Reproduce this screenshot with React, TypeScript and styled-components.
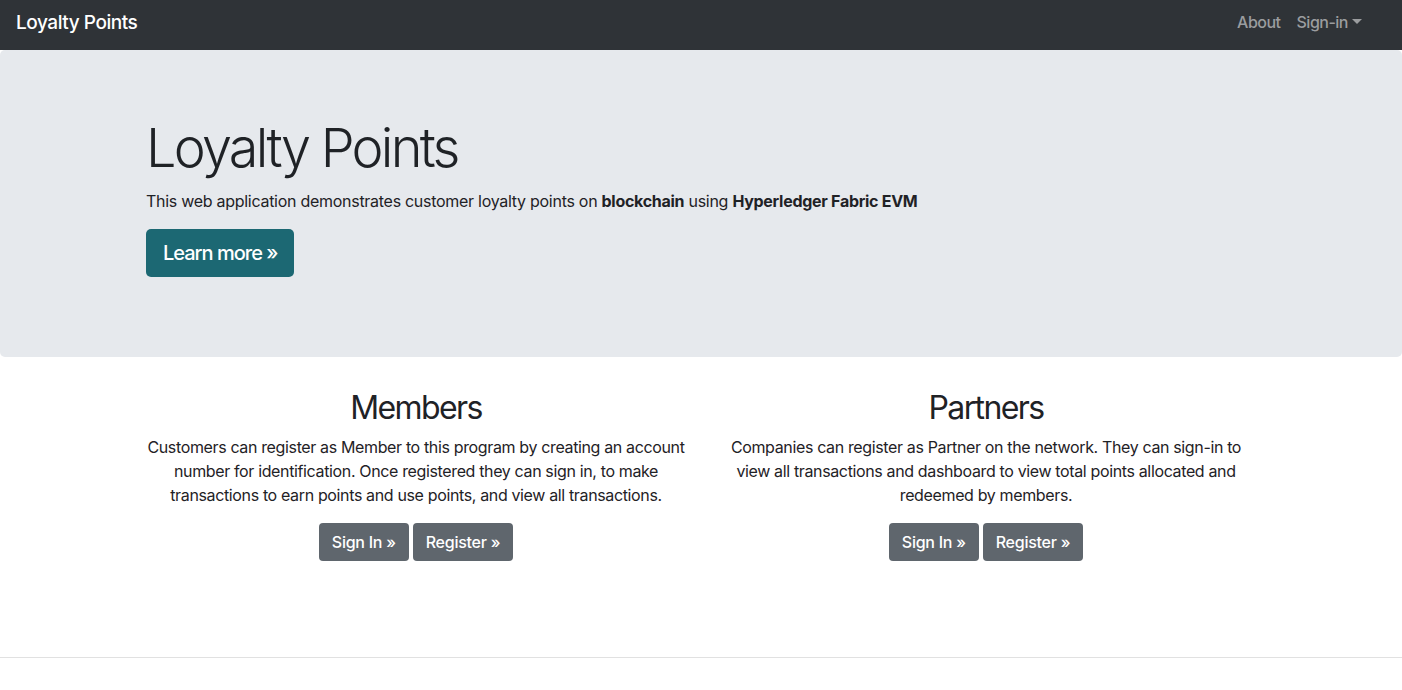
import React from 'react';
import styled, { createGlobalStyle } from 'styled-components';

const GlobalStyle = createGlobalStyle`
  html, body {
    margin: 0;
    padding: 0;
    background: #ffffff;
  }
  body {
    font-family: Inter, "Liberation Sans", Arial, sans-serif;
    font-size: 16px;
    line-height: 1.5;
    color: #1f2226;
  }
  * {
    box-sizing: border-box;
  }
`;

const Navbar = styled.nav`
  display: flex;
  align-items: center;
  justify-content: space-between;
  height: 50px;
  padding: 0 16px;
  background-color: #2f3337;
`;

const Brand = styled.a`
  font-size: 19px;
  line-height: 30px;
  font-weight: 500;
  letter-spacing: -0.45px;
  color: #ffffff;
  text-decoration: none;
  margin-top: -4px;
`;

const NavLinks = styled.div`
  display: flex;
  align-items: center;
  margin-right: 16px;
  margin-top: -6px;
`;

const NavLink = styled.a<{ caret?: boolean }>`
  font-size: 16px;
  line-height: 24px;
  padding: 8px 8px;
  color: #9b9d9f;
  font-weight: 500;
  letter-spacing: -0.5px;
  text-decoration: none;
  cursor: pointer;

  ${props => props.caret && `
    &::after {
      content: '';
      display: inline-block;
      margin-left: 4px;
      vertical-align: 4px;
      border-top: 5px solid #9b9d9f;
      border-left: 5px solid transparent;
      border-right: 5px solid transparent;
    }
  `}
`;

const Jumbotron = styled.section`
  background-color: #e6e9ed;
  border-radius: 5px;
  padding: 64px 32px;
  margin-bottom: 32px;
`;

const Container = styled.div`
  width: 1140px;
  margin: 0 auto;
  padding: 0 15px;
`;

const DisplayTitle = styled.h1`
  margin: 0 0 8px;
  font-size: 54px;
  line-height: 67px;
  font-weight: 300;
  letter-spacing: -2.75px;
  color: #1f2226;
`;

const Lead = styled.p`
  margin: 0 0 16px;
  font-size: 16px;
  line-height: 24px;
  letter-spacing: -0.28px;

  b {
    font-weight: 700;
  }
`;

const ButtonRow = styled.p<{ center?: boolean }>`
  margin: 0 0 16px;
  display: flex;
  gap: 4px;
  justify-content: ${props => (props.center ? 'center' : 'flex-start')};
`;

const Button = styled.a<{ size?: 'lg' | 'md'; tone?: 'teal' | 'grey' }>`
  display: inline-block;
  border-radius: ${props => (props.size === 'lg' ? '5px' : '4px')};
  padding: ${props => (props.size === 'lg' ? '9px 17px' : '7px 13px')};
  font-size: ${props => (props.size === 'lg' ? '20px' : '16px')};
  line-height: ${props => (props.size === 'lg' ? '30px' : '24px')};
  font-weight: 500;
  letter-spacing: ${props => (props.size === 'lg' ? '-1px' : '-0.25px')};
  color: #ffffff;
  text-decoration: none;
  background-color: ${props => (props.tone === 'teal' ? '#1c6873' : '#5f666d')};
  cursor: pointer;
`;

const Row = styled.div`
  display: grid;
  grid-template-columns: 1fr 1fr;
  margin: 0 -15px;
`;

const Column = styled.div`
  padding: 0 15px;
  text-align: center;
`;

const SectionTitle = styled.h2`
  margin: 0 0 8px;
  font-size: 32px;
  line-height: 38px;
  font-weight: 400;
  letter-spacing: -1.6px;
`;

const SectionText = styled.p`
  margin: 0 0 16px;
  font-size: 16px;
  line-height: 24px;
  letter-spacing: -0.36px;
`;

const Divider = styled.hr`
  margin: 80px 0 0;
  border: 0;
  border-top: 1px solid #e1e1e1;
`;

const sections = [
  {
    title: 'Members',
    text:
      'Customers can register as Member to this program by creating an account number for identification. Once registered they can sign in, to make transactions to earn points and use points, and view all transactions.',
  },
  {
    title: 'Partners',
    text:
      'Companies can register as Partner on the network. They can sign-in to view all transactions and dashboard to view total points allocated and redeemed by members.',
  },
];

export default function App() {
  return (
    <>
      <GlobalStyle />
      <Navbar>
        <Brand href="#">Loyalty Points</Brand>
        <NavLinks>
          <NavLink>About</NavLink>
          <NavLink caret>Sign-in</NavLink>
        </NavLinks>
      </Navbar>

      <Jumbotron>
        <Container>
          <DisplayTitle>Loyalty Points</DisplayTitle>
          <Lead>
            This web application demonstrates customer loyalty points on <b>blockchain</b> using{' '}
            <b>Hyperledger Fabric EVM</b>
          </Lead>
          <ButtonRow>
            <Button size="lg" tone="teal">Learn more »</Button>
          </ButtonRow>
        </Container>
      </Jumbotron>

      <Container>
        <Row>
          {sections.map(s => (
            <Column key={s.title}>
              <SectionTitle>{s.title}</SectionTitle>
              <SectionText>{s.text}</SectionText>
              <ButtonRow center>
                <Button tone="grey">Sign In »</Button>
                <Button tone="grey">Register »</Button>
              </ButtonRow>
            </Column>
          ))}
        </Row>
      </Container>

      <Divider />
    </>
  );
}
